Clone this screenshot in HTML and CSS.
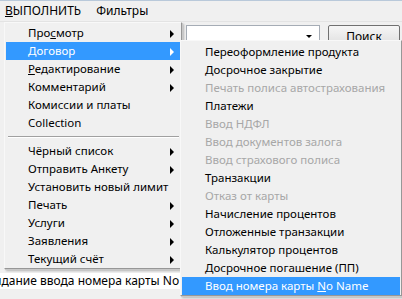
FILE: index.html
```html
<!DOCTYPE html>
<html lang="ru">
<head>
    <meta charset="UTF-8">
    <title>Выполнить</title>
    <link rel="stylesheet" href="styles.css">
</head>
<body>
    <div class="window">
        <div class="menubar">
            <span class="menubar-item open"><u>В</u>ЫПОЛНИТЬ</span>
            <span class="menubar-item">Фильтры</span>
        </div>
        <div class="toolbar">
            <div class="combo">
                <div class="combo-field"></div>
                <div class="combo-arrow"></div>
            </div>
            <button class="search-button">Поиск</button>
        </div>
        <div class="workspace"></div>
        <div class="status">
            <span class="status-text">Ожидание ввода номера карты No Name</span>
        </div>

        <!-- main dropdown -->
        <div class="menu menu-main">
            <div class="menu-item sub">Про<u>с</u>мотр</div>
            <div class="menu-item sub active">Договор</div>
            <div class="menu-item sub"><u>Р</u>едактирование</div>
            <div class="menu-item sub">Комментарий</div>
            <div class="menu-item">Комиссии и платы</div>
            <div class="menu-item">Collection</div>
            <div class="menu-separator"></div>
            <div class="menu-item sub">Чёрный список</div>
            <div class="menu-item sub">Отправить Анкету</div>
            <div class="menu-item">Установить новый лимит</div>
            <div class="menu-item sub">Печать</div>
            <div class="menu-item sub">Услуги</div>
            <div class="menu-item sub">Заявления</div>
            <div class="menu-item sub">Текущий счёт</div>
        </div>

        <!-- Договор submenu -->
        <div class="menu menu-sub">
            <div class="menu-item">Переоформление продукта</div>
            <div class="menu-item">Досрочное закрытие</div>
            <div class="menu-item disabled">Печать полиса автострахования</div>
            <div class="menu-item">Платежи</div>
            <div class="menu-item disabled">Ввод НДФЛ</div>
            <div class="menu-item disabled">Ввод документов залога</div>
            <div class="menu-item disabled">Ввод страхового полиса</div>
            <div class="menu-item">Транзакции</div>
            <div class="menu-item disabled">Отказ от карты</div>
            <div class="menu-item">Начисление процентов</div>
            <div class="menu-item">Отложенные транзакции</div>
            <div class="menu-item">Калькулятор процентов</div>
            <div class="menu-item">Досрочное погашение (ПП)</div>
            <div class="menu-item active">Ввод номера карты <u>N</u>o Name</div>
        </div>
    </div>
</body>
</html>
```

FILE: styles.css
```css
body {
    margin: 0;
    padding: 0;
    background-color: #f0f0f0;
    font-family: "Noto Sans", "Open Sans", sans-serif;
    font-size: 11.5px;
    color: #000;
}
.window {
    position: relative;
    width: 402px;
    height: 299px;
    overflow: hidden;
    display: flex;
    flex-direction: column;
}
.menubar {
    height: 22px;
    display: flex;
    align-items: center;
    padding-left: 5px;
    gap: 15px;
    border-top: 1px solid #b9c9da;
    border-bottom: 1px solid #e3e3e3;
    box-sizing: border-box;
    background: #f0f0f0;
    font-size: 12px;
}
.menubar-item {
    line-height: 18px;
}
.toolbar {
    display: flex;
    justify-content: flex-end;
    align-items: flex-start;
    gap: 8px;
    padding: 3px 2px 0 186px;
    height: 22px;
}
.combo {
    flex-grow: 1;
    display: flex;
    height: 19px;
    border: 1px solid #a5acb5;
    border-right: none;
    background: white;
}
.combo-field {
    flex-grow: 1;
}
.combo-arrow {
    width: 14px;
    position: relative;
    border-right: 1px solid #a5acb5;
}
.combo-arrow::after {
    content: "";
    position: absolute;
    left: 1px;
    top: 9px;
    border-left: 3px solid transparent;
    border-right: 3px solid transparent;
    border-top: 3px solid #000;
}
.search-button {
    width: 72px;
    height: 22px;
    font-family: inherit;
    font-size: 12px;
    padding: 0;
    background: linear-gradient(#f6f6f6, #dedede);
    border: 1px solid #707070;
    border-radius: 2px;
    color: #000;
}
.workspace {
    flex-grow: 1;
}
.status {
    height: 16px;
    margin-bottom: 10px;
    background: white;
    overflow: hidden;
    white-space: nowrap;
    line-height: 16px;
    font-size: 12px;
}
.status-text {
    margin-left: -24px;
}

.menu {
    position: absolute;
    background: #f0f0f0;
    border: 1px solid #979797;
    border-top-color: #f8f8f8;
    border-left-color: #f8f8f8;
    box-shadow: 1px 1px 0 #c8c8c8, 2px 2px 2px rgba(0, 0, 0, 0.25);
    padding: 1px;
    box-sizing: border-box;
}
.menu-main {
    left: 4px;
    top: 22px;
    width: 178px;
    height: 247px;
}
.menu-sub {
    left: 180px;
    top: 40px;
    width: 222px;
    height: 256px;
    padding-top: 2px;
}
.menu-item {
    position: relative;
    height: 18px;
    line-height: 18px;
    padding-left: 22px;
    white-space: nowrap;
}
.menu-sub .menu-item {
    padding-left: 23px;
}
.menu-item.sub::after {
    content: "";
    position: absolute;
    right: 6px;
    top: 6px;
    border-top: 4px solid transparent;
    border-bottom: 4px solid transparent;
    border-left: 4px solid #000;
}
.menu-item.active {
    background: #3399ff;
    color: white;
}
.menu-item.active.sub::after {
    border-left-color: white;
}
.menu-item.disabled {
    color: #a7a7a7;
}
.menu-separator {
    height: 1px;
    margin: 4px 1px 4px 2px;
    background: #a0a0a0;
    border-bottom: 1px solid white;
}
```
